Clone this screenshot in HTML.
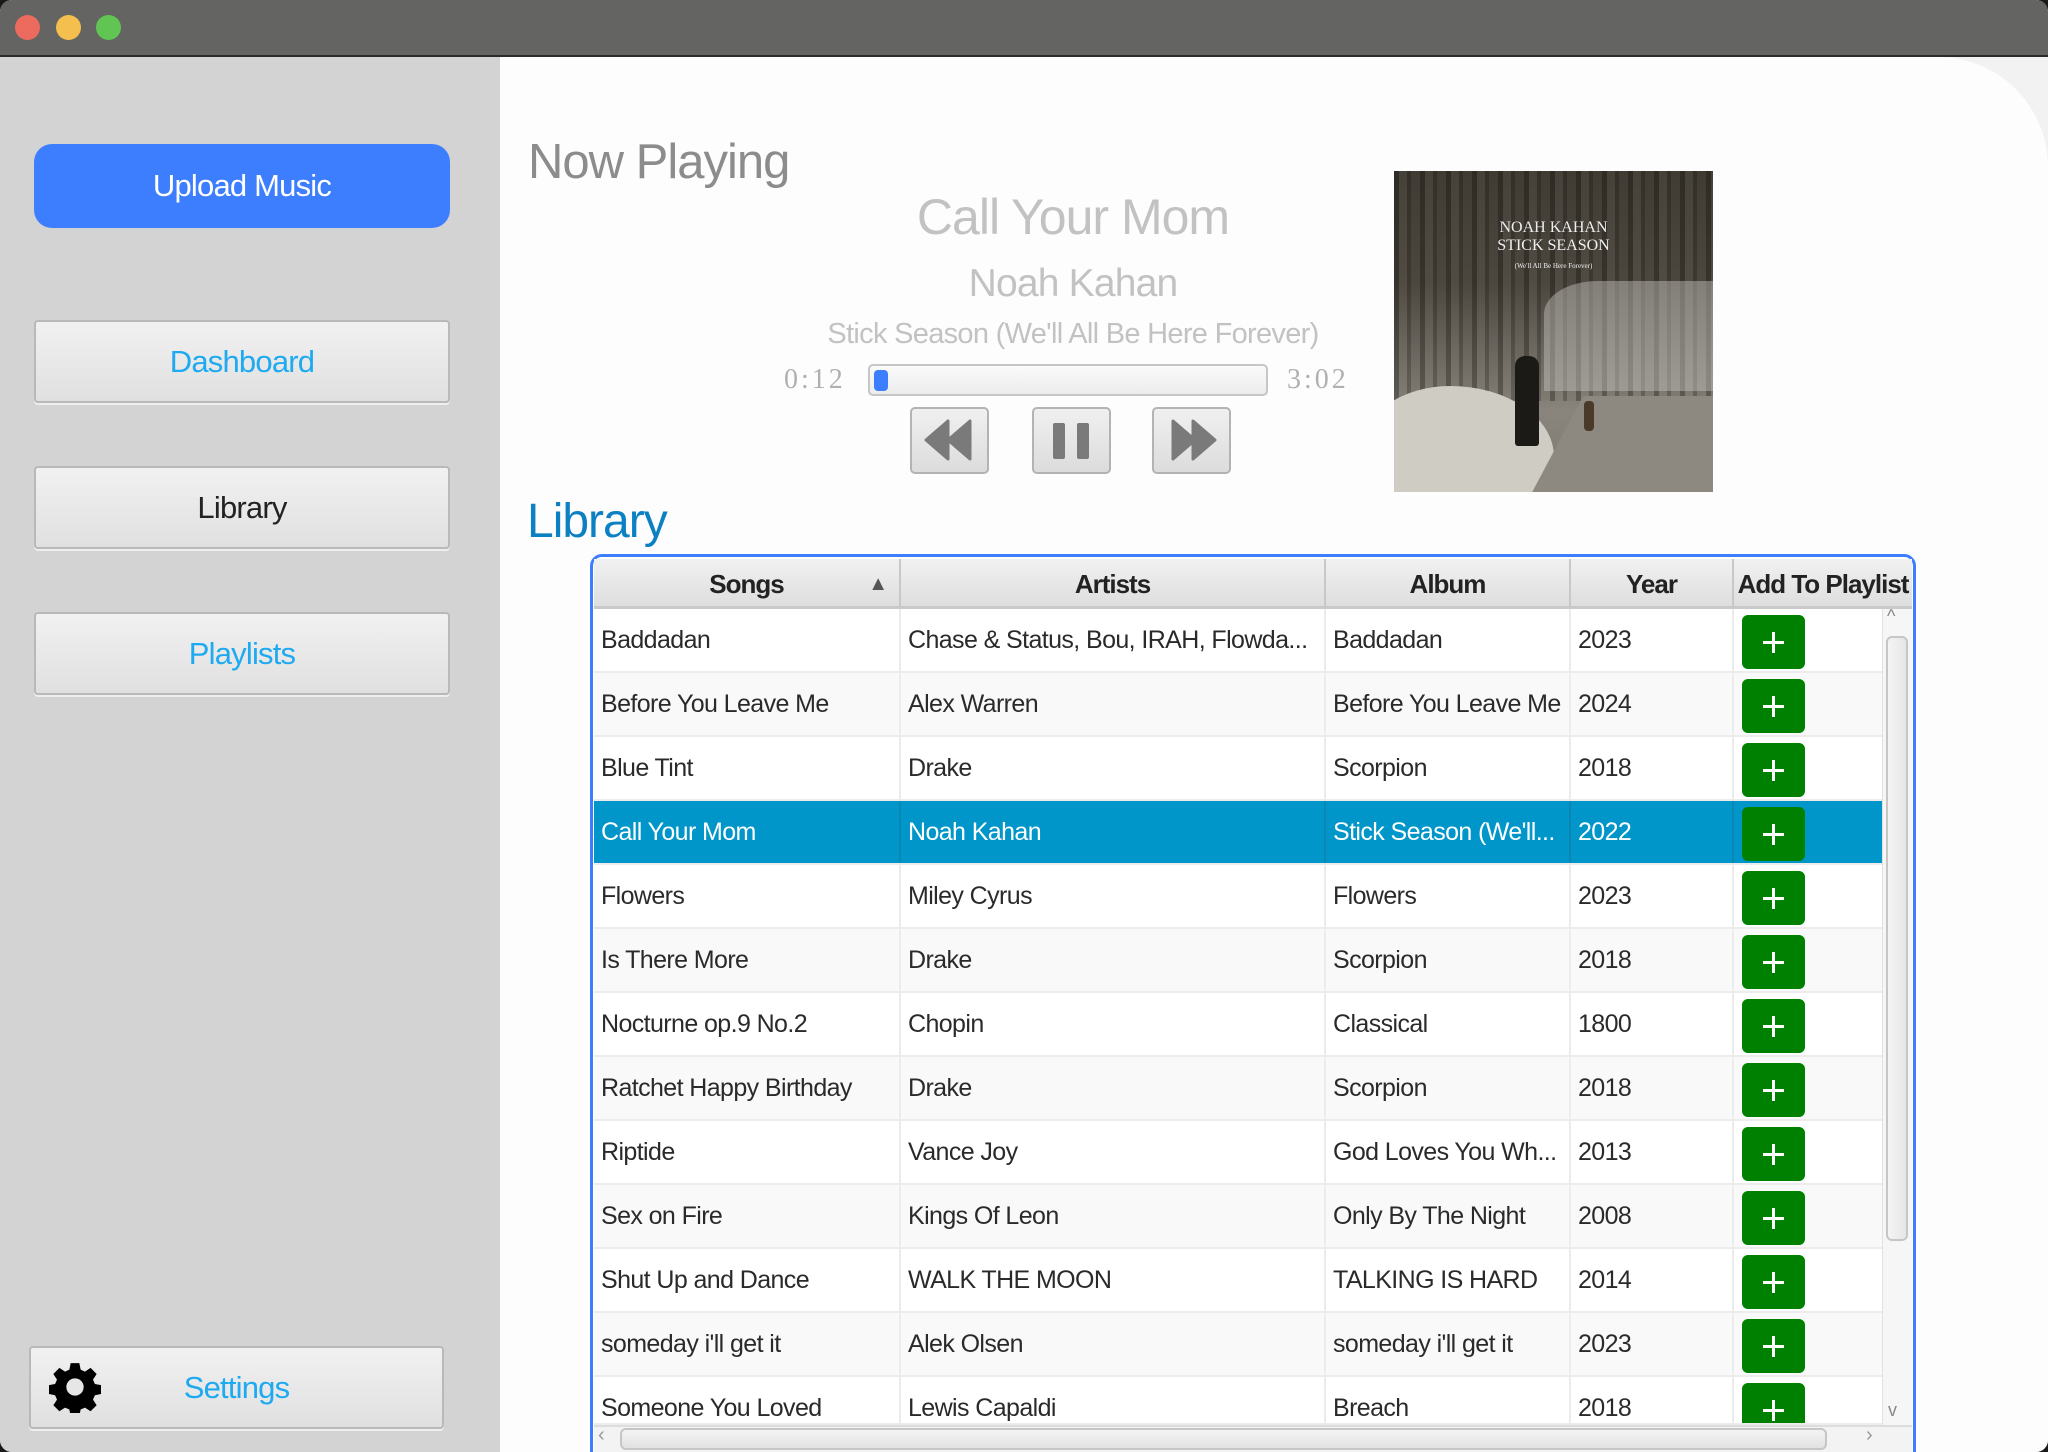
<!DOCTYPE html>
<html><head><meta charset="utf-8">
<style>
*{margin:0;padding:0;box-sizing:border-box}
body{width:2048px;height:1452px;overflow:hidden;background:#1a1a1a;font-family:"Liberation Sans",sans-serif;position:relative}
.abs{position:absolute}
#win{position:absolute;left:0;top:0;width:2048px;height:1452px;border-radius:12px;overflow:hidden;background:#f2f2f2}
#title{left:0;top:0;width:2048px;height:57px;background:#646462;border-bottom:2px solid #2a2a2a}
.tl{position:absolute;top:15px;width:25px;height:25px;border-radius:50%}
#side{left:0;top:57px;width:500px;height:1395px;background:#d3d3d3}
#main{left:500px;top:57px;width:1548px;height:1395px;background:#fdfdfd;border-top-right-radius:110px}
.btn{position:absolute;left:34px;width:416px;height:83px;border:2px solid #b9b9b9;border-radius:4px;background:linear-gradient(#f1f1f1,#e0e0e0);font-size:31px;letter-spacing:-0.8px;display:flex;align-items:center;justify-content:center;box-shadow:0 2px 0 #eee}
.ctl{position:absolute;top:407px;width:79px;height:67px;border:2px solid #b3b3b3;border-radius:5px;background:linear-gradient(#f0f0f0,#dcdcdc)}
.row{position:absolute;left:594px;width:1288px;height:64px;border-bottom:2px solid #ececec;font-size:25px;letter-spacing:-0.6px;color:#2a2a2a}
.row div{position:absolute;top:0;height:62px;line-height:62px;padding-left:7px;white-space:nowrap;overflow:hidden;border-right:2px solid #ececec}
.c1{left:0;width:307px}.c2{left:307px;width:425px}.c3{left:732px;width:245px}.c4{left:977px;width:163px}.c5{left:1140px;width:148px;border-right:none!important}
.plus{position:absolute;left:1148px;top:6px;width:63px;height:54px;background:#008000;border-radius:6px}
.plus:before{content:"";position:absolute;left:30px;top:17px;width:3px;height:21px;background:#fff}
.plus:after{content:"";position:absolute;left:21px;top:26px;width:21px;height:3px;background:#fff}
.hd{position:absolute;top:559px;height:50px;line-height:50px;text-align:center;font-size:26px;font-weight:bold;letter-spacing:-1px;color:#222;background:linear-gradient(#f1f1f1,#dedede);border-right:2px solid #c8c8c8;border-bottom:3px solid #c9c9c9}
.sel{background:#0096c9!important;color:#fff!important}
.sel div{border-right-color:#0a86b5}
</style></head><body>
<div id="win">
<div id="title" class="abs">
 <div class="tl" style="left:15px;background:#ec6a5e"></div>
 <div class="tl" style="left:56px;background:#f4bf4f"></div>
 <div class="tl" style="left:96px;background:#61c554"></div>
</div>
<div id="side" class="abs"></div>
<div id="main" class="abs"></div>

<div class="abs" style="left:34px;top:144px;width:416px;height:84px;background:#3d7eff;border-radius:18px;color:#fff;font-size:31px;letter-spacing:-0.8px;display:flex;align-items:center;justify-content:center">Upload Music</div>
<div class="btn" style="top:320px;color:#1eaaf1">Dashboard</div>
<div class="btn" style="top:466px;color:#222">Library</div>
<div class="btn" style="top:612px;color:#1eaaf1">Playlists</div>
<div class="btn" style="top:1346px;left:29px;width:415px;color:#1eaaf1"><span style="margin-left:0">Settings</span></div>
<svg class="abs" style="left:49px;top:1361px" width="52" height="52" viewBox="0 0 24 24"><path fill="#000" d="M10 1h4l.6 3 2 .9 2.6-1.7 2.8 2.8-1.7 2.6.9 2 3 .6v4l-3 .6-.9 2 1.7 2.6-2.8 2.8-2.6-1.7-2 .9-.6 3h-4l-.6-3-2-.9-2.6 1.7-2.8-2.8 1.7-2.6-.9-2-3-.6v-4l3-.6.9-2-1.7-2.6 2.8-2.8 2.6 1.7 2-.9z"/><circle cx="12" cy="12" r="4" fill="#e6e6e6"/></svg>

<div class="abs" style="left:528px;top:134px;font-size:49px;color:#8c8c8c;letter-spacing:-1px">Now Playing</div>
<div class="abs" style="left:773px;width:600px;text-align:center;top:188px;font-size:50px;color:#c2c2c2;letter-spacing:-1px">Call Your Mom</div>
<div class="abs" style="left:773px;width:600px;text-align:center;top:262px;font-size:39px;color:#c2c2c2;letter-spacing:-0.8px">Noah Kahan</div>
<div class="abs" style="left:723px;width:700px;text-align:center;top:318px;font-size:29px;color:#c2c2c2;letter-spacing:-0.7px">Stick Season (We'll All Be Here Forever)</div>
<div class="abs" style="left:784px;top:364px;font-family:'Liberation Serif',serif;font-size:28px;color:#b0b0b0;letter-spacing:3px">0:12</div>
<div class="abs" style="left:1287px;top:364px;font-family:'Liberation Serif',serif;font-size:28px;color:#b0b0b0;letter-spacing:3px">3:02</div>
<div class="abs" style="left:868px;top:364px;width:400px;height:32px;border:2px solid #c6c6c6;border-radius:5px;background:linear-gradient(#fafafa,#ececec)"></div>
<div class="abs" style="left:874px;top:370px;width:14px;height:21px;background:#3d7eff;border-radius:4px"></div>

<div class="ctl" style="left:910px"><svg width="75" height="63" viewBox="0 0 75 63"><path d="M14 31 L36 12 V50Z M36 31 L58 12 V50Z" fill="#7a7a7a" stroke="#7a7a7a" stroke-width="3" stroke-linejoin="round"/></svg></div>
<div class="ctl" style="left:1032px"><svg width="75" height="63" viewBox="0 0 75 63"><rect x="19" y="14" width="12" height="36" rx="2" fill="#7a7a7a"/><rect x="43" y="14" width="12" height="36" rx="2" fill="#7a7a7a"/></svg></div>
<div class="ctl" style="left:1152px"><svg width="75" height="63" viewBox="0 0 75 63"><path d="M19 12 L41 31 L19 50Z M39 12 L61 31 L39 50Z" fill="#7a7a7a" stroke="#7a7a7a" stroke-width="3" stroke-linejoin="round"/></svg></div>

<div class="abs" style="left:1394px;top:171px;width:319px;height:321px;overflow:hidden;background:linear-gradient(180deg,#3d3931 0%,#4a453c 35%,#6a665e 55%,#8a857c 75%,#7d7870 100%)">
 <div class="abs" style="left:0;top:0;width:319px;height:230px;background:repeating-linear-gradient(90deg,rgba(20,18,15,.35) 0 5px,rgba(120,115,105,.15) 5px 13px,rgba(30,27,22,.3) 13px 17px,rgba(90,85,78,.1) 17px 26px)"></div>
 <div class="abs" style="left:150px;top:110px;width:180px;height:110px;background:rgba(200,198,192,.45);border-radius:30% 0 0 0"></div>
 <div class="abs" style="left:-30px;top:215px;width:190px;height:130px;background:#cfccc4;border-radius:50% 60% 0 0"></div>
 <div class="abs" style="left:160px;top:225px;width:220px;height:110px;background:#8e8980;transform:skewX(-28deg)"></div>
 <div class="abs" style="left:121px;top:185px;width:24px;height:90px;background:#1c1a17;border-radius:10px 10px 3px 3px"></div>
 <div class="abs" style="left:190px;top:230px;width:10px;height:30px;background:#4a3a2a;border-radius:4px"></div>
 <div class="abs" style="left:0;top:48px;width:319px;text-align:center;font-family:'Liberation Serif',serif;color:#eee;font-size:16px;line-height:18px">NOAH KAHAN<br>STICK SEASON<br><span style="font-size:7px">(We'll All Be Here Forever)</span></div>
</div>

<div class="abs" style="left:527px;top:494px;font-size:48px;color:#0b80c2;letter-spacing:-1px">Library</div>

<div class="abs" style="left:590px;top:554px;width:1326px;height:910px;border:3px solid #3d7eff;border-radius:12px 12px 0 0;background:#fff"></div>
<div class="hd" style="left:594px;width:307px">Songs<span style="position:absolute;right:12px;font-size:20px;color:#555">▲</span></div>
<div class="hd" style="left:901px;width:425px">Artists</div>
<div class="hd" style="left:1326px;width:245px">Album</div>
<div class="hd" style="left:1571px;width:163px">Year</div>
<div class="hd" style="left:1734px;width:178px;border-right:none">Add To Playlist</div>

<div class="row" style="top:609px;background:#fff"><div class="c1">Baddadan</div><div class="c2">Chase &amp; Status, Bou, IRAH, Flowda...</div><div class="c3">Baddadan</div><div class="c4">2023</div><div class="c5"></div><span class="plus"></span></div>
<div class="row" style="top:673px;background:#f9f9f9"><div class="c1">Before You Leave Me</div><div class="c2">Alex Warren</div><div class="c3">Before You Leave Me</div><div class="c4">2024</div><div class="c5"></div><span class="plus"></span></div>
<div class="row" style="top:737px;background:#fff"><div class="c1">Blue Tint</div><div class="c2">Drake</div><div class="c3">Scorpion</div><div class="c4">2018</div><div class="c5"></div><span class="plus"></span></div>
<div class="row sel" style="top:801px"><div class="c1">Call Your Mom</div><div class="c2">Noah Kahan</div><div class="c3">Stick Season (We'll...</div><div class="c4">2022</div><div class="c5"></div><span class="plus"></span></div>
<div class="row" style="top:865px;background:#fff"><div class="c1">Flowers</div><div class="c2">Miley Cyrus</div><div class="c3">Flowers</div><div class="c4">2023</div><div class="c5"></div><span class="plus"></span></div>
<div class="row" style="top:929px;background:#f9f9f9"><div class="c1">Is There More</div><div class="c2">Drake</div><div class="c3">Scorpion</div><div class="c4">2018</div><div class="c5"></div><span class="plus"></span></div>
<div class="row" style="top:993px;background:#fff"><div class="c1">Nocturne op.9 No.2</div><div class="c2">Chopin</div><div class="c3">Classical</div><div class="c4">1800</div><div class="c5"></div><span class="plus"></span></div>
<div class="row" style="top:1057px;background:#f9f9f9"><div class="c1">Ratchet Happy Birthday</div><div class="c2">Drake</div><div class="c3">Scorpion</div><div class="c4">2018</div><div class="c5"></div><span class="plus"></span></div>
<div class="row" style="top:1121px;background:#fff"><div class="c1">Riptide</div><div class="c2">Vance Joy</div><div class="c3">God Loves You Wh...</div><div class="c4">2013</div><div class="c5"></div><span class="plus"></span></div>
<div class="row" style="top:1185px;background:#f9f9f9"><div class="c1">Sex on Fire</div><div class="c2">Kings Of Leon</div><div class="c3">Only By The Night</div><div class="c4">2008</div><div class="c5"></div><span class="plus"></span></div>
<div class="row" style="top:1249px;background:#fff"><div class="c1">Shut Up and Dance</div><div class="c2">WALK THE MOON</div><div class="c3">TALKING IS HARD</div><div class="c4">2014</div><div class="c5"></div><span class="plus"></span></div>
<div class="row" style="top:1313px;background:#f9f9f9"><div class="c1">someday i'll get it</div><div class="c2">Alek Olsen</div><div class="c3">someday i'll get it</div><div class="c4">2023</div><div class="c5"></div><span class="plus"></span></div>
<div class="row" style="top:1377px;background:#fff;height:48px;overflow:hidden"><div class="c1">Someone You Loved</div><div class="c2">Lewis Capaldi</div><div class="c3">Breach</div><div class="c4">2018</div><div class="c5"></div><span class="plus"></span></div>

<div class="abs" style="left:1882px;top:609px;width:30px;height:816px;background:#f6f6f6;border-left:1px solid #e2e2e2"></div>
<div class="abs" style="left:1886px;top:636px;width:22px;height:605px;border:2px solid #c6c6c6;border-radius:6px;background:linear-gradient(90deg,#f4f4f4,#e6e6e6)"></div>
<div class="abs" style="left:1887px;top:606px;font-size:18px;color:#888">^</div>
<div class="abs" style="left:1888px;top:1400px;font-size:18px;color:#888">v</div>
<div class="abs" style="left:594px;top:1425px;width:1318px;height:30px;background:#f3f3f3;border-top:2px solid #ddd"></div>
<div class="abs" style="left:620px;top:1428px;width:1207px;height:22px;border:2px solid #c6c6c6;border-radius:6px;background:linear-gradient(#f4f4f4,#e2e2e2)"></div>
<div class="abs" style="left:598px;top:1424px;font-size:20px;color:#999">‹</div>
<div class="abs" style="left:1866px;top:1424px;font-size:20px;color:#999">›</div>
</div>
</body></html>
